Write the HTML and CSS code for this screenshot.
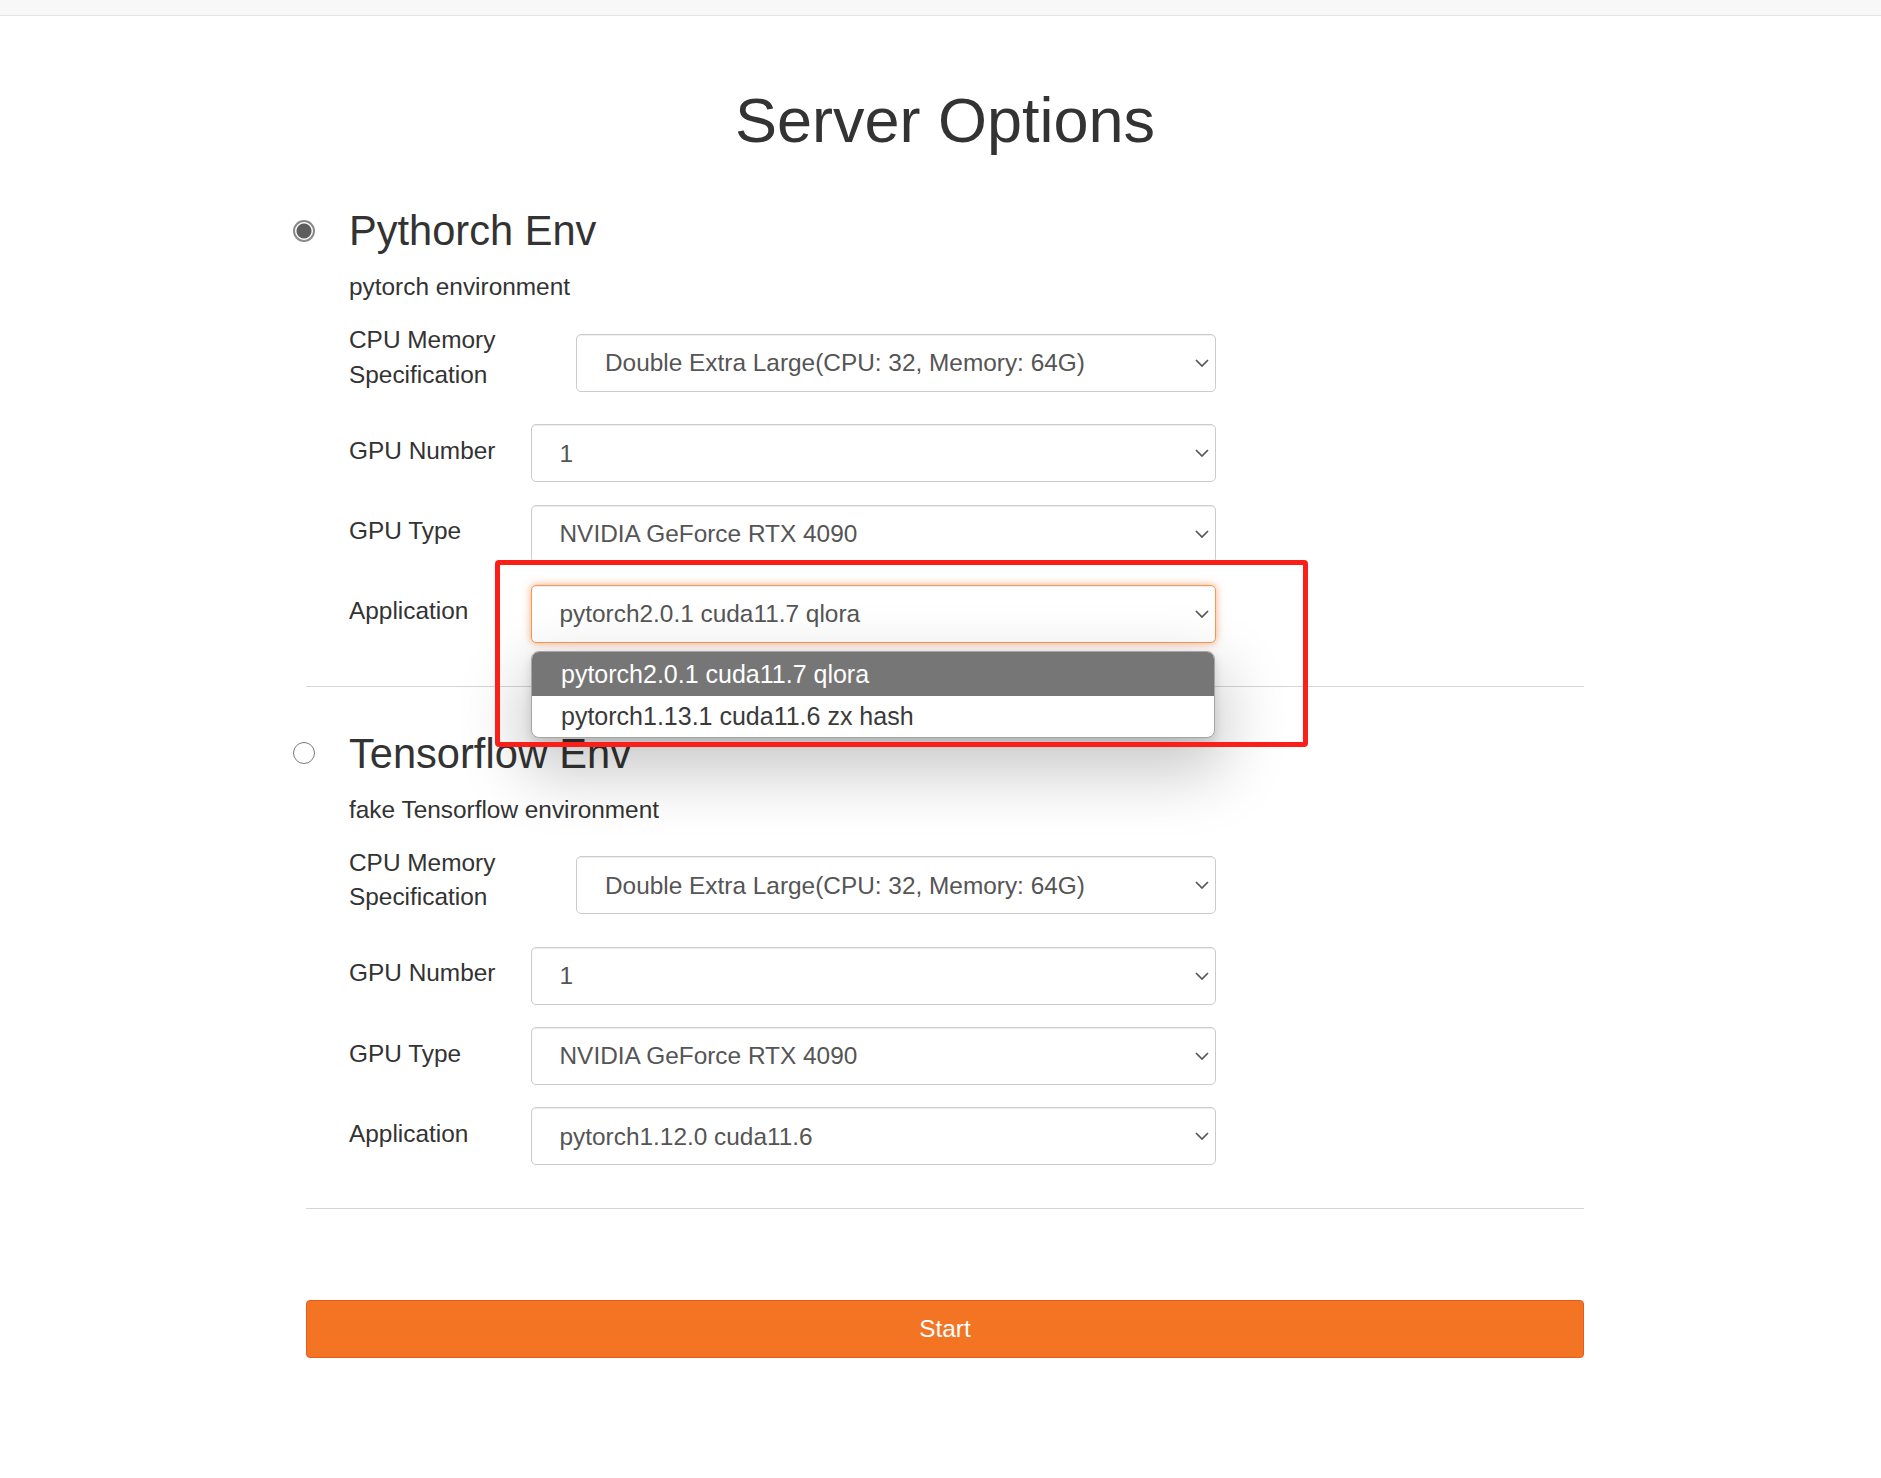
FILE: index.html
```html
<!DOCTYPE html>
<html lang="en">
<head>
<meta charset="utf-8">
<title>Server Options</title>
<link rel="stylesheet" href="styles.css">
</head>
<body>
<div class="topbar"></div>
<main class="page">
  <h1 class="page-title">Server Options</h1>
  <form class="spawn-form">
    <section class="env">
      <label class="env-head">
        <input type="radio" name="profile" class="env-radio" checked>
        <span class="env-name">Pythorch Env</span>
      </label>
      <p class="env-desc">pytorch environment</p>
      <div class="field">
        <label class="field-label field-label-wide">CPU Memory Specification</label>
        <div class="select-wrap">
          <select class="control"><option>Double Extra Large(CPU: 32, Memory: 64G)</option></select>
          <svg class="chevron" width="14" height="8" viewBox="0 0 14 8"><polyline points="1,1 7,7 13,1" /></svg>
        </div>
      </div>
      <div class="field">
        <label class="field-label">GPU Number</label>
        <div class="select-wrap">
          <select class="control"><option>1</option></select>
          <svg class="chevron" width="14" height="8" viewBox="0 0 14 8"><polyline points="1,1 7,7 13,1" /></svg>
        </div>
      </div>
      <div class="field">
        <label class="field-label">GPU Type</label>
        <div class="select-wrap">
          <select class="control"><option>NVIDIA GeForce RTX 4090</option></select>
          <svg class="chevron" width="14" height="8" viewBox="0 0 14 8"><polyline points="1,1 7,7 13,1" /></svg>
        </div>
      </div>
      <div class="field">
        <label class="field-label">Application</label>
        <div class="select-wrap">
          <select class="control control-focus"><option>pytorch2.0.1 cuda11.7 qlora</option><option>pytorch1.13.1 cuda11.6 zx hash</option></select>
          <svg class="chevron" width="14" height="8" viewBox="0 0 14 8"><polyline points="1,1 7,7 13,1" /></svg>
          <ul class="dropdown">
            <li class="dropdown-item dropdown-item-active">pytorch2.0.1 cuda11.7 qlora</li>
            <li class="dropdown-item">pytorch1.13.1 cuda11.6 zx hash</li>
          </ul>
          <div class="annotation"></div>
        </div>
      </div>
    </section>
    <hr class="divider">
    <section class="env">
      <label class="env-head">
        <input type="radio" name="profile" class="env-radio">
        <span class="env-name">Tensorflow Env</span>
      </label>
      <p class="env-desc">fake Tensorflow environment</p>
      <div class="field">
        <label class="field-label field-label-wide">CPU Memory Specification</label>
        <div class="select-wrap">
          <select class="control"><option>Double Extra Large(CPU: 32, Memory: 64G)</option></select>
          <svg class="chevron" width="14" height="8" viewBox="0 0 14 8"><polyline points="1,1 7,7 13,1" /></svg>
        </div>
      </div>
      <div class="field">
        <label class="field-label">GPU Number</label>
        <div class="select-wrap">
          <select class="control"><option>1</option></select>
          <svg class="chevron" width="14" height="8" viewBox="0 0 14 8"><polyline points="1,1 7,7 13,1" /></svg>
        </div>
      </div>
      <div class="field">
        <label class="field-label">GPU Type</label>
        <div class="select-wrap">
          <select class="control"><option>NVIDIA GeForce RTX 4090</option></select>
          <svg class="chevron" width="14" height="8" viewBox="0 0 14 8"><polyline points="1,1 7,7 13,1" /></svg>
        </div>
      </div>
      <div class="field">
        <label class="field-label">Application</label>
        <div class="select-wrap">
          <select class="control"><option>pytorch1.12.0 cuda11.6</option></select>
          <svg class="chevron" width="14" height="8" viewBox="0 0 14 8"><polyline points="1,1 7,7 13,1" /></svg>
        </div>
      </div>
    </section>
    <hr class="divider">
    <button type="button" class="start-btn">Start</button>
  </form>
</main>
</body>
</html>
```

FILE: styles.css
```css
html, body {
  margin: 0;
  padding: 0;
  background: #fff;
}

body {
  font-family: "Liberation Sans", Arial, Helvetica, sans-serif;
  font-size: 24.4px;
  line-height: 34.3px;
  color: #333;
}

.topbar {
  height: 15px;
  background: #f8f8f8;
  border-bottom: 1px solid #e4e4e4;
}

.page {
  width: 1278px;
  margin-left: 306px;
}

.page-title {
  margin: 70px 0 10.4px;
  font-size: 63px;
  font-weight: 400;
  line-height: 68.2px;
  text-align: center;
  color: #333;
}

.spawn-form {
  margin: 0;
}

.env {
  padding: 43.5px 0 43.2px 43px;
}

.env-head {
  display: flex;
  align-items: center;
  font-size: 41.6px;
  line-height: 45.1px;
  color: #333;
}

.env-radio {
  appearance: none;
  -webkit-appearance: none;
  flex: none;
  box-sizing: border-box;
  width: 22px;
  height: 22px;
  margin: 0 34px 0 -56px;
  border-radius: 50%;
  border: 1.6px solid #7a7a7a;
  background: #fff;
}

.env-radio:checked {
  border: 2px solid #8a8a8a;
  background: radial-gradient(circle, #5e5e5e 0, #5e5e5e 7px, #fff 8px);
}

.env-desc {
  margin: 17.2px 0 18.7px;
}

.field {
  display: flex;
  align-items: center;
  width: 867px;
  margin-bottom: 22.3px;
}

.field:last-child {
  margin-bottom: 0;
}

.field-label {
  flex: none;
  box-sizing: border-box;
  width: 181.5px;
  padding-bottom: 4.5px;
}

.field-label-wide {
  width: 227px;
  padding-bottom: 10px;
}

.select-wrap {
  position: relative;
  flex: 1;
}

.control {
  appearance: none;
  -webkit-appearance: none;
  display: block;
  box-sizing: border-box;
  width: 100%;
  height: 58px;
  margin: 0;
  padding: 0 30px 0 28px;
  font-family: inherit;
  font-size: 24.4px;
  color: #555;
  background: #fff;
  border: 1px solid #ccc;
  border-radius: 5px;
  box-shadow: inset 0 1px 1px rgba(0, 0, 0, 0.075);
  outline: none;
}

.control-focus {
  border-color: #f39a5c;
  box-shadow: inset 0 1px 1px rgba(0, 0, 0, 0.075), 0 0 9px rgba(243, 117, 36, 0.6);
}

.chevron {
  position: absolute;
  right: 7px;
  top: 50%;
  transform: translateY(-50%);
  fill: none;
  stroke: #555;
  stroke-width: 1.7;
  pointer-events: none;
}

.dropdown {
  position: absolute;
  z-index: 5;
  top: 66px;
  left: 0.5px;
  width: 684px;
  box-sizing: border-box;
  margin: 0;
  padding: 0;
  list-style: none;
  background: #fff;
  border: 1px solid #a6a6a6;
  border-radius: 8px;
  overflow: hidden;
  box-shadow: 0 4px 10px rgba(0, 0, 0, 0.14), 0 26px 64px 8px rgba(0, 0, 0, 0.22);
}

.dropdown-item {
  height: 41px;
  padding-left: 29px;
  line-height: 41px;
  font-size: 25px;
  color: #3a3a3a;
}

.dropdown-item-active {
  height: 44px;
  line-height: 44px;
  background: #767676;
  color: #fff;
}

.annotation {
  position: absolute;
  z-index: 6;
  left: -35.5px;
  top: -25px;
  width: 813px;
  height: 187px;
  box-sizing: border-box;
  border: 5px solid #fa1f18;
  border-radius: 4px;
  pointer-events: none;
}

.divider {
  margin: 0;
  border: 0;
  border-top: 1px solid #d4d4d4;
  height: 0;
}

.start-btn {
  display: block;
  box-sizing: border-box;
  width: 100%;
  height: 58px;
  margin-top: 91px;
  padding: 0;
  font-family: inherit;
  font-size: 24.4px;
  color: #fff;
  background: #f37524;
  border: 1px solid #e8591c;
  border-radius: 4px;
  cursor: pointer;
}
```
